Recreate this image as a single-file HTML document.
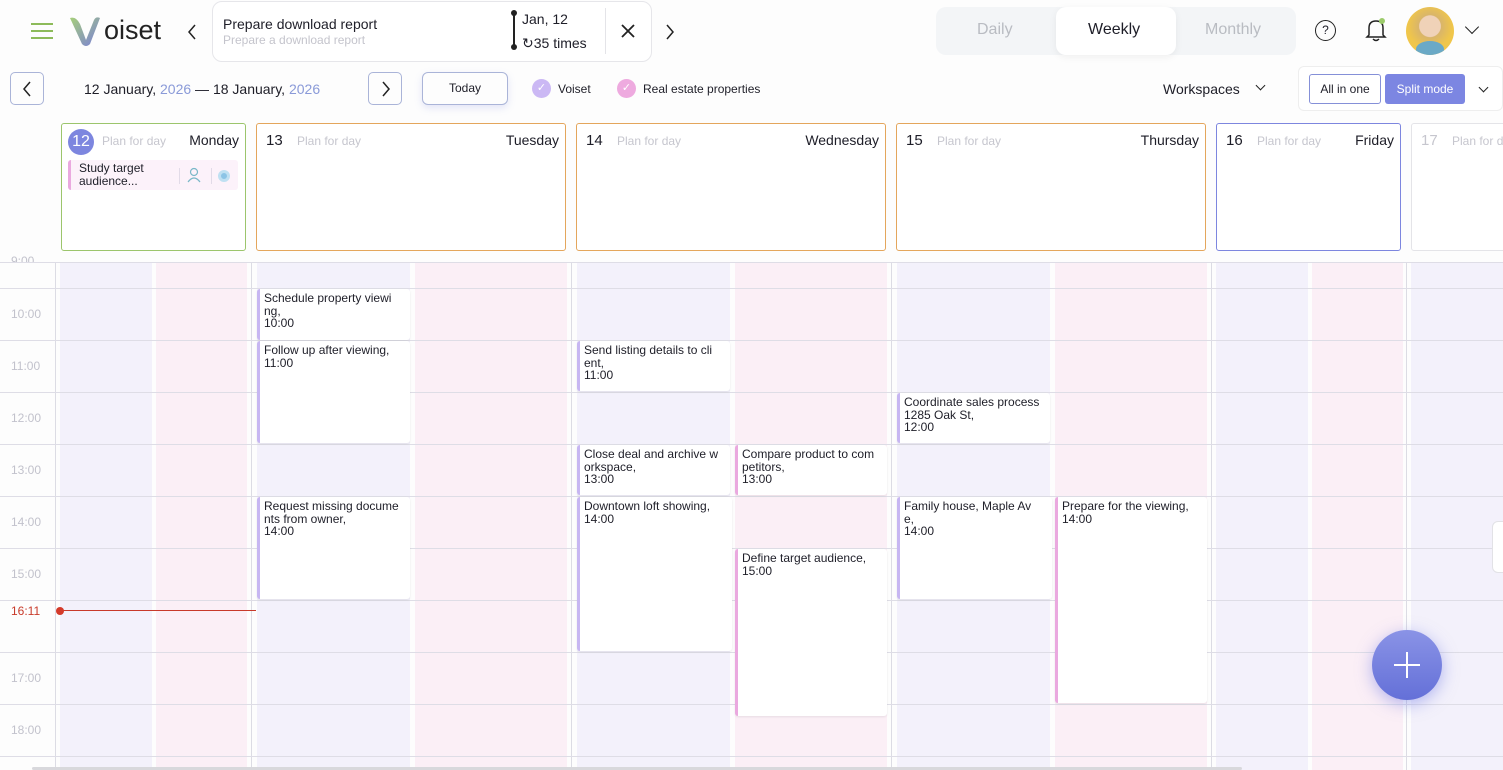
<!DOCTYPE html>
<html><head><meta charset="utf-8"><style>
*{box-sizing:border-box;margin:0;padding:0}
body{width:1503px;height:770px;overflow:hidden;background:#fdfdfd;font-family:"Liberation Sans",sans-serif;color:#1e1e28;position:relative}
.a{position:absolute}
.col{position:absolute;top:262px;height:508px}
.lav{background:#f3f1fb}.pink{background:#fbeff6}
.hl{position:absolute;left:0;width:1503px;height:1px;background:#dedde6}
.vl{position:absolute;top:262px;width:1px;height:508px;background:#dcdce4}
.tl{position:absolute;left:11px;font-size:12px;color:#c2c2cc}
.ev{position:absolute;background:#fff;border-left:3px solid #c7b6f2;border-radius:3px;font-size:12px;line-height:12.5px;padding:3px 0 0 4px;box-shadow:0 1px 2px rgba(0,0,0,.08);white-space:pre}
.ev.p{border-left-color:#eaa9df}
.day{position:absolute;top:123px;height:128px;border:1px solid #e4a65c;border-radius:3px;background:#fff}
.dn{position:absolute;left:9px;top:8px;font-size:15px}
.pf{position:absolute;left:40px;top:10px;font-size:12px;color:#c6c6ce}
.dw{position:absolute;right:6px;top:8px;font-size:14px}
.btn{position:absolute;width:34px;height:33px;border:1px solid #aab4d8;border-radius:5px}
</style></head><body>
<!-- header -->
<div class="a" style="left:31px;top:23px;width:22px;height:2px;background:#8dbb5a;box-shadow:0 7px 0 #8dbb5a,0 14px 0 #8dbb5a"></div>
<svg class="a" style="left:68px;top:14px" width="36" height="34" viewBox="0 0 36 34"><defs><linearGradient id="g" x1="0" y1="0" x2="1" y2="1"><stop offset="0" stop-color="#a6cf7a"/><stop offset="1" stop-color="#7a7fd8"/></linearGradient></defs><path d="M2 4 Q8 2 12 10 L18 26 L26 6 Q28 2 32 4 L22 30 Q18 34 14 30 Z" fill="url(#g)"/></svg>
<div class="a" style="left:104px;top:15px;font-size:27px;color:#222">oiset</div>
<svg class="a" style="left:187px;top:24px" width="10" height="16" viewBox="0 0 10 16"><path d="M8 1 L2 8 L8 15" fill="none" stroke="#222" stroke-width="1.5"/></svg>
<div class="a" style="left:212px;top:1px;width:440px;height:61px;border:1px solid #e6e6ea;border-radius:10px;background:#fff"></div>
<div class="a" style="left:223px;top:16px;font-size:14px">Prepare download report</div>
<div class="a" style="left:223px;top:33px;font-size:12px;color:#c4c4cc">Prepare a download report</div>
<div class="a" style="left:513px;top:12px;width:2px;height:36px;background:#222"></div>
<div class="a" style="left:511px;top:10px;width:6px;height:6px;border-radius:50%;background:#222"></div>
<div class="a" style="left:511px;top:44px;width:6px;height:6px;border-radius:50%;background:#222"></div>
<div class="a" style="left:522px;top:11px;font-size:14px">Jan, 12</div>
<div class="a" style="left:522px;top:35px;font-size:14px">↻35 times</div>
<div class="a" style="left:605px;top:8px;width:1px;height:46px;background:#e4e4e8"></div>
<svg class="a" style="left:621px;top:24px" width="14" height="14" viewBox="0 0 14 14"><path d="M1 1 L13 13 M13 1 L1 13" stroke="#222" stroke-width="1.8"/></svg>
<svg class="a" style="left:665px;top:24px" width="10" height="16" viewBox="0 0 10 16"><path d="M2 1 L8 8 L2 15" fill="none" stroke="#222" stroke-width="1.5"/></svg>

<div class="a" style="left:936px;top:7px;width:360px;height:48px;background:#f3f5f7;border-radius:10px"></div>
<div class="a" style="left:1056px;top:7px;width:120px;height:48px;background:#fff;border-radius:10px;box-shadow:0 2px 8px rgba(0,0,0,.06)"></div>
<div class="a" style="left:977px;top:21px;font-size:16px;color:#b9bcc2">Daily</div>
<div class="a" style="left:1088px;top:21px;font-size:16px">Weekly</div>
<div class="a" style="left:1205px;top:21px;font-size:16px;color:#b9bcc2">Monthly</div>
<div class="a" style="left:1315px;top:20px;width:21px;height:21px;border:1.5px solid #222;border-radius:50%;font-size:12px;text-align:center;line-height:18px">?</div>
<svg class="a" style="left:1364px;top:17px" width="24" height="26" viewBox="0 0 24 26"><path d="M5 18 L5 11 Q5 4 12 4 Q19 4 19 11 L19 18 L21 20 L3 20 Z M9 22 Q12 25 15 22" fill="none" stroke="#222" stroke-width="1.5"/><circle cx="18" cy="4" r="3" fill="#9ccb6a"/></svg>
<div class="a" style="left:1406px;top:7px;width:48px;height:48px;border-radius:50%;background:radial-gradient(circle at 50% 40%,#f0d2b8 0 28%,#d9b56a 30%,#f0c64a 60%);overflow:hidden"><div style="position:absolute;left:10px;top:34px;width:28px;height:16px;background:#6aa9c6;border-radius:50% 50% 0 0"></div></div>
<div class="a" style="left:1467px;top:22px;width:10px;height:10px;border-right:1.5px solid #222;border-bottom:1.5px solid #222;transform:rotate(45deg)"></div>

<!-- toolbar -->
<div class="btn" style="left:10px;top:72px"><svg class="a" style="left:11px;top:8px" width="10" height="16" viewBox="0 0 10 16"><path d="M8 1 L2 8 L8 15" fill="none" stroke="#222" stroke-width="1.5"/></svg></div>
<div class="a" style="left:84px;top:81px;font-size:14px">12 January, <span style="color:#8a9ad8">2026</span> — 18 January, <span style="color:#8a9ad8">2026</span></div>
<div class="btn" style="left:368px;top:72px"><svg class="a" style="left:12px;top:8px" width="10" height="16" viewBox="0 0 10 16"><path d="M2 1 L8 8 L2 15" fill="none" stroke="#222" stroke-width="1.5"/></svg></div>
<div class="a" style="left:422px;top:72px;width:86px;height:33px;border:1px solid #aab4d8;border-radius:6px;text-align:center;font-size:12px;line-height:31px;box-shadow:0 3px 8px rgba(120,130,220,.2)">Today</div>
<div class="a" style="left:532px;top:79px;width:19px;height:19px;border-radius:50%;background:#cbb8f4;color:#fff;font-size:11px;text-align:center;line-height:19px">✓</div>
<div class="a" style="left:558px;top:82px;font-size:12px">Voiset</div>
<div class="a" style="left:617px;top:79px;width:19px;height:19px;border-radius:50%;background:#eeaadf;color:#fff;font-size:11px;text-align:center;line-height:19px">✓</div>
<div class="a" style="left:643px;top:82px;font-size:12px">Real estate properties</div>
<div class="a" style="left:1163px;top:81px;font-size:14px">Workspaces</div>
<div class="a" style="left:1257px;top:82px;width:7px;height:7px;border-right:1.2px solid #222;border-bottom:1.2px solid #222;transform:rotate(45deg)"></div>
<div class="a" style="left:1298px;top:66px;width:205px;height:45px;border:1px solid #eee;border-radius:6px;background:#fff"></div>
<div class="a" style="left:1309px;top:74px;width:72px;height:30px;border:1px solid #8590d8;border-radius:3px;font-size:12px;text-align:center;line-height:28px">All in one</div>
<div class="a" style="left:1385px;top:74px;width:80px;height:30px;background:#7c86e2;border-radius:3px;font-size:12px;color:#fff;text-align:center;line-height:30px">Split mode</div>
<div class="a" style="left:1480px;top:84px;width:7px;height:7px;border-right:1.2px solid #222;border-bottom:1.2px solid #222;transform:rotate(45deg)"></div>

<!-- day headers -->
<div class="day" style="left:61px;width:185px;border-color:#9cc56c"><div class="a" style="left:6px;top:5px;width:26px;height:26px;border-radius:50%;background:#7d86df;color:#fff;font-size:16px;text-align:center;line-height:26px">12</div><div class="pf">Plan for day</div><div class="dw">Monday</div>
<div class="a" style="left:6px;top:36px;width:170px;height:30px;background:#fcf2fa;border-left:3px solid #eaa9df;border-radius:3px;font-size:12px;line-height:13px;padding:2px 0 0 8px">Study target<br>audience...</div>
<div class="a" style="left:117px;top:44px;width:1px;height:16px;background:#e2dbe8"></div>
<svg class="a" style="left:125px;top:43px" width="14" height="16" viewBox="0 0 14 16"><circle cx="7" cy="5" r="3.5" fill="none" stroke="#7ab8c8" stroke-width="1.2"/><path d="M1 15 Q7 7 13 15" fill="none" stroke="#7ab8c8" stroke-width="1.2"/></svg>
<div class="a" style="left:149px;top:44px;width:1px;height:16px;background:#e2dbe8"></div><div class="a" style="left:156px;top:46px;width:12px;height:12px;border-radius:50%;background:#8cc4e6;border:3px solid #bfe0f2"></div></div>
<div class="day" style="left:256px;width:310px"><div class="dn">13</div><div class="pf">Plan for day</div><div class="dw">Tuesday</div></div>
<div class="day" style="left:576px;width:310px"><div class="dn">14</div><div class="pf">Plan for day</div><div class="dw">Wednesday</div></div>
<div class="day" style="left:896px;width:310px"><div class="dn">15</div><div class="pf">Plan for day</div><div class="dw">Thursday</div></div>
<div class="day" style="left:1216px;width:185px;border-color:#7d86df"><div class="dn">16</div><div class="pf">Plan for day</div><div class="dw">Friday</div></div>
<div class="day" style="left:1411px;width:120px;border-color:#e4e4e8"><div class="dn" style="color:#c6c6ce">17</div><div class="pf">Plan for day</div></div>

<!-- grid -->
<div class="col lav" style="left:60px;width:92px"></div><div class="col pink" style="left:156px;width:91px"></div>
<div class="col lav" style="left:257px;width:153px"></div><div class="col pink" style="left:415px;width:152px"></div>
<div class="col lav" style="left:577px;width:153px"></div><div class="col pink" style="left:735px;width:152px"></div>
<div class="col lav" style="left:897px;width:153px"></div><div class="col pink" style="left:1055px;width:152px"></div>
<div class="col lav" style="left:1216px;width:92px"></div><div class="col pink" style="left:1312px;width:91px"></div>
<div class="col lav" style="left:1411px;width:92px"></div>
<div class="vl" style="left:55px"></div><div class="vl" style="left:251px"></div><div class="vl" style="left:571px"></div><div class="vl" style="left:891px"></div><div class="vl" style="left:1211px"></div><div class="vl" style="left:1406px"></div>
<div class="hl" style="top:262px"></div><div class="hl" style="top:288px"></div><div class="hl" style="top:340px"></div><div class="hl" style="top:392px"></div><div class="hl" style="top:444px"></div><div class="hl" style="top:496px"></div><div class="hl" style="top:548px"></div><div class="hl" style="top:600px"></div><div class="hl" style="top:652px"></div><div class="hl" style="top:704px"></div><div class="hl" style="top:756px"></div>
<div class="a" style="left:0;top:252px;width:55px;height:10px;overflow:hidden"><div class="tl" style="top:2px">9:00</div></div>
<div class="tl" style="top:307px">10:00</div><div class="tl" style="top:359px">11:00</div><div class="tl" style="top:411px">12:00</div><div class="tl" style="top:463px">13:00</div><div class="tl" style="top:515px">14:00</div><div class="tl" style="top:567px">15:00</div><div class="tl" style="top:671px">17:00</div><div class="tl" style="top:723px">18:00</div>
<div class="tl" style="top:604px;color:#c83a2a">16:11</div>
<div class="a" style="left:60px;top:610px;width:196px;height:1px;background:#c83a2a"></div>
<div class="a" style="left:56px;top:607px;width:8px;height:8px;border-radius:50%;background:#d43a2a"></div>

<!-- events -->
<div class="ev" style="left:257px;top:289px;width:153px;height:51px">Schedule property viewi
ng,
10:00</div>
<div class="ev" style="left:257px;top:341px;width:153px;height:102px">Follow up after viewing,
11:00</div>
<div class="ev" style="left:257px;top:497px;width:153px;height:102px">Request missing docume
nts from owner,
14:00</div>
<div class="ev" style="left:577px;top:341px;width:153px;height:50px">Send listing details to cli
ent,
11:00</div>
<div class="ev" style="left:577px;top:445px;width:153px;height:50px">Close deal and archive w
orkspace,
13:00</div>
<div class="ev" style="left:577px;top:497px;width:155px;height:154px">Downtown loft showing,
14:00</div>
<div class="ev p" style="left:735px;top:445px;width:152px;height:50px">Compare product to com
petitors,
13:00</div>
<div class="ev p" style="left:735px;top:549px;width:152px;height:167px">Define target audience,
15:00</div>
<div class="ev" style="left:897px;top:393px;width:153px;height:50px">Coordinate sales process
1285 Oak St,
12:00</div>
<div class="ev" style="left:897px;top:497px;width:155px;height:102px">Family house, Maple Av
e,
14:00</div>
<div class="ev p" style="left:1055px;top:497px;width:152px;height:206px">Prepare for the viewing,
14:00</div>

<div class="a" style="left:1492px;top:521px;width:20px;height:52px;background:#fff;border:1px solid #e2e2e6;border-radius:6px"></div>
<div class="a" style="left:1372px;top:630px;width:70px;height:70px;border-radius:50%;background:linear-gradient(#8a93e6,#6470d8);box-shadow:0 4px 16px rgba(110,120,230,.5)">
<svg class="a" style="left:21px;top:21px" width="28" height="28" viewBox="0 0 28 28"><path d="M14 1 V27 M1 14 H27" stroke="#fff" stroke-width="2"/></svg></div>
<div class="a" style="left:32px;top:767px;width:1210px;height:3px;background:#d8d8dc;border-radius:2px"></div>
</body></html>
